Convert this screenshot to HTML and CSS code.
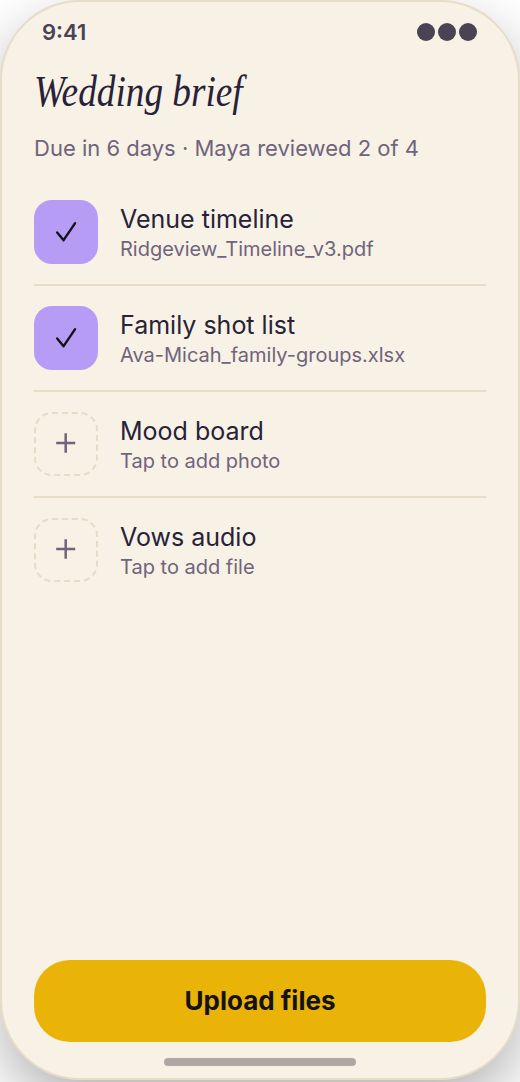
FILE: index.html
```html
<!DOCTYPE html>
<html lang="en">
<head>
<meta charset="utf-8">
<title>Wedding brief</title>
<link rel="stylesheet" href="styles.css">
</head>
<body>
<main class="phone">
  <header class="status"><span>9:41</span><span class="dots"><i></i><i></i><i></i></span></header>
  <h1 class="title">Wedding brief</h1>
  <p class="due">Due in 6 days · Maya reviewed 2 of 4</p>
  <ul class="list">
    <li class="row"><span class="box done"><svg class="icon check" viewBox="0 0 24 24"><path d="M3.2 12.4 9.6 20.2 21.1 3.2"/></svg></span><div class="text"><div class="name">Venue timeline</div><div class="file">Ridgeview_Timeline_v3.pdf</div></div></li>
    <li class="row"><span class="box done"><svg class="icon check" viewBox="0 0 24 24"><path d="M3.2 12.4 9.6 20.2 21.1 3.2"/></svg></span><div class="text"><div class="name">Family shot list</div><div class="file">Ava-Micah_family-groups.xlsx</div></div></li>
    <li class="row"><span class="box"><svg class="icon" viewBox="0 0 24 24"><path d="M2.2 11H21.2M11.7 1.3V20.7"/></svg></span><div class="text"><div class="name">Mood board</div><div class="file">Tap to add photo</div></div></li>
    <li class="row"><span class="box"><svg class="icon" viewBox="0 0 24 24"><path d="M2.2 11H21.2M11.7 1.3V20.7"/></svg></span><div class="text"><div class="name">Vows audio</div><div class="file">Tap to add file</div></div></li>
  </ul>
  <button class="upload">Upload files</button>
  <div class="home"></div>
</main>
</body>
</html>
```
FILE: styles.css
```css
* { box-sizing: border-box; margin: 0; padding: 0; }
body { min-height: 1082px; overflow: hidden; background: #fff; font-family: Inter, sans-serif; color: #272238; }
.phone { width: 520px; height: 1080px; background: #f8f1e5; border: 2px solid #e6dcc8; border-radius: 80px; padding: 0 32px; display: flex; flex-direction: column; box-shadow: 0 24px 60px rgba(0,0,0,.3); }
.status { display: flex; justify-content: space-between; align-items: center; padding: 14px 9px 0 8px; height: 45px; font-size: 22px; font-weight: 600; color: #4a4354; }
.dots { display: flex; gap: 3px; }
.dots i { width: 18px; height: 18px; border-radius: 50%; background: #4a4354; }
.title { font: italic 400 45px/50px "Liberation Serif", serif; margin-top: 19px; white-space: nowrap; transform: scaleX(.828); transform-origin: left; }
.due { font-size: 22px; line-height: 30px; margin-top: 17px; color: #6f647c; }
.list { list-style: none; margin-top: 17px; }
.row { display: flex; align-items: center; gap: 22px; height: 106px; border-bottom: 2px solid #e6dcc8; }
.row:last-child { height: 104px; border: 0; }
.box { width: 64px; height: 64px; border: 2px dashed #e6dcc8; border-radius: 18px; display: flex; align-items: center; justify-content: center; color: #6f647c; }
.done { background: #b69cf4; border: 0; color: #141218; }
.icon { width: 24px; height: 24px; fill: none; stroke: currentColor; stroke-width: 2.5; }
.check { stroke-width: 2.4; stroke-linecap: round; stroke-linejoin: round; }
.text { padding-top: 2px; }
.name { font-size: 25px; line-height: 32px; }
.file { font-size: 20px; line-height: 28px; color: #6f647c; }
.upload { margin-top: auto; height: 82px; flex: none; border: 0; border-radius: 36px; background: #eab308; font: 700 26px Inter, sans-serif; color: #141218; padding-bottom: 1px; }
.home { width: 192px; height: 8px; border-radius: 4px; background: #aea8a5; margin: 16px auto 12px; flex: none; }
```
